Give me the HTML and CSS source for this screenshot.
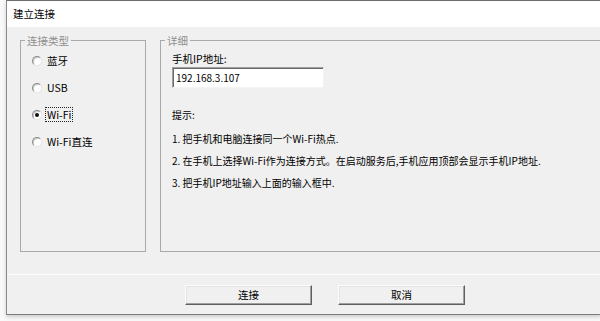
FILE: index.html
```html
<!DOCTYPE html>
<html lang="zh-CN">
<head>
<meta charset="utf-8">
<title>建立连接</title>
<link rel="stylesheet" href="styles.css">
</head>
<body>
<div class="window">
  <div class="titlebar">建立连接</div>
  <div class="client">
    <div class="groups">
      <fieldset class="group group-type">
        <legend>连接类型</legend>
        <div class="radio-list">
          <div class="radio"><span class="dot"></span><span class="label">蓝牙</span></div>
          <div class="radio"><span class="dot"></span><span class="label">USB</span></div>
          <div class="radio"><span class="dot checked"></span><span class="label focus">Wi-Fi</span></div>
          <div class="radio"><span class="dot"></span><span class="label">Wi-Fi直连</span></div>
        </div>
      </fieldset>
      <fieldset class="group group-detail">
        <legend>详细</legend>
        <div class="detail-body">
          <div class="field-label">手机IP地址:</div>
          <div class="input">192.168.3.107</div>
          <div class="hints">
            <p class="hint-title">提示:</p>
            <p>1. 把手机和电脑连接同一个Wi-Fi热点.</p>
            <p>2. 在手机上选择Wi-Fi作为连接方式。在启动服务后,手机应用顶部会显示手机IP地址.</p>
            <p>3. 把手机IP地址输入上面的输入框中.</p>
          </div>
        </div>
      </fieldset>
    </div>
    <div class="footer">
      <button class="btn">连接</button>
      <button class="btn">取消</button>
    </div>
  </div>
</div>
</body>
</html>
```

FILE: styles.css
```css
html, body {
  margin: 0;
  padding: 0;
}
body {
  width: 600px;
  height: 321px;
  overflow: hidden;
  background: #f9f9f9;
  font-family: "Noto Sans CJK SC", "Noto Sans", sans-serif;
  font-size: 10.5px;
  color: #000;
}
.window {
  margin-left: 6px;
  width: 594px;
  height: 313px;
  overflow: hidden;
  border-top: 1px solid #6e6e6e;
  border-left: 1px solid #8a8a8a;
  border-bottom: 1px solid #7a7a7a;
  box-sizing: content-box;
  box-shadow: 0 2px 4px rgba(0, 0, 0, 0.18);
  display: flex;
  flex-direction: column;
}
.titlebar {
  height: 26px;
  line-height: 26px;
  background: #fff;
  padding-left: 6px;
  font-size: 10.5px;
}
.client {
  flex: 1;
  background: #f0f0f0;
  padding-top: 7px;
  display: flex;
  flex-direction: column;
}
.groups {
  display: flex;
  gap: 14px;
  padding-left: 13px;
  height: 218px;
}
.group {
  margin: 0;
  padding: 0;
  min-width: 0;
  box-sizing: border-box;
  border: 1px solid #a9a9a9;
}
.group legend {
  padding: 0 2px;
  margin-left: 4px;
  line-height: 13px;
  color: #8e8e8e;
  font-size: 10.5px;
}
.group-type {
  width: 126px;
  flex: none;
}
.group-detail {
  flex: 1;
  border-right: 0;
}
.detail-body {
  padding-left: 11px;
}
.radio-list {
  display: flex;
  flex-direction: column;
  padding-left: 11px;
}
.radio {
  height: 27px;
  display: flex;
  align-items: center;
  gap: 5px;
}
.dot {
  width: 8px;
  height: 8px;
  border-radius: 50%;
  background: #fff;
  border: 1px solid;
  border-color: #8a8a8a #e4e4e4 #e4e4e4 #8a8a8a;
  box-shadow: inset 1px 1px 0 #c8c8c8;
  display: flex;
  align-items: center;
  justify-content: center;
}
.dot.checked::after {
  content: "";
  width: 4px;
  height: 4px;
  border-radius: 50%;
  background: #111;
}
.label {
  line-height: 13px;
  padding: 0 1px;
  margin-left: -1px;
}
.label.focus {
  outline: 1px dotted #222;
}
.field-label {
  margin-top: 5px;
  line-height: 14px;
}
.input {
  margin-top: 1px;
  width: 152px;
  height: 21px;
  box-sizing: border-box;
  background: #fff;
  border: 1px solid;
  border-color: #a0a0a0 #f4f4f4 #f4f4f4 #a0a0a0;
  box-shadow: inset 1px 1px 0 #696969;
  padding-left: 3px;
  line-height: 19px;
  font-size: 10px;
}
.hints {
  margin-top: 16px;
  font-size: 10px;
}
.hints p {
  margin: 0;
  height: 22px;
  line-height: 22px;
  white-space: nowrap;
}
.hints .hint-title {
  margin-bottom: 2px;
}
.footer {
  margin-top: 22px;
  border-top: 1px solid #fcfcfc;
  padding-top: 10px;
  padding-left: 178px;
  display: flex;
  gap: 26px;
}
.btn {
  width: 127px;
  height: 20px;
  padding: 0;
  margin: 0;
  background: #f0f0f0;
  border: 1px solid;
  border-color: #fdfdfd #5f5f5f #5f5f5f #fdfdfd;
  box-shadow: inset -1px -1px 0 #a0a0a0, inset 1px 1px 0 #e3e3e3;
  font-family: "Noto Sans CJK SC", "Noto Sans", sans-serif;
  font-size: 10.5px;
  color: #000;
  line-height: 18px;
}
```
